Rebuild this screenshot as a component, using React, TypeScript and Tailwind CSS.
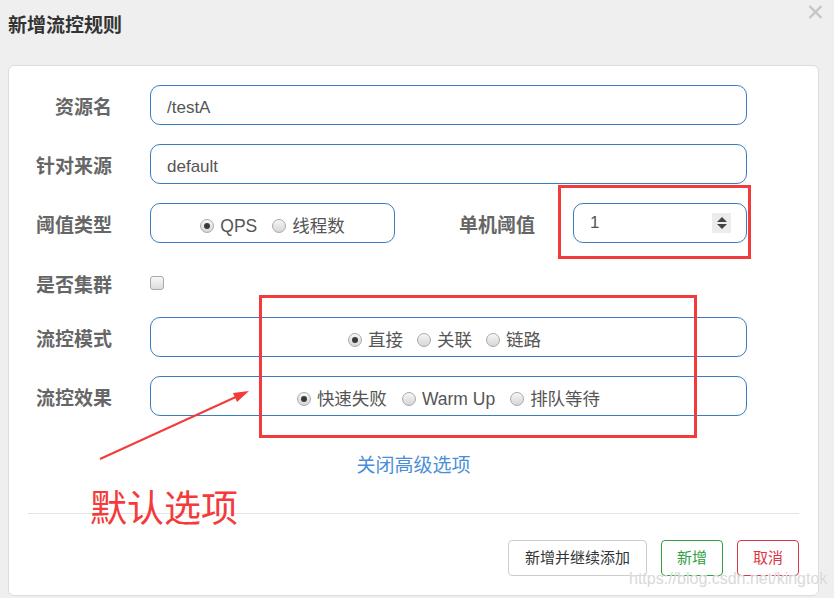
import type React from "react"

const font = "font-['Liberation_Sans','Noto_Sans_CJK_SC',sans-serif]"

const Radio: React.FC<{ checked?: boolean; label: string }> = ({ checked, label }) => (
    <label className="flex items-center gap-[6px]">
        <span className="w-[14px] h-[14px] rounded-full border border-[#a9a9a9] bg-gradient-to-b from-[#f6f6f6] to-[#d6d6d6] flex items-center justify-center">
            {checked && <span className="w-[6px] h-[6px] rounded-full bg-[#3a3a3a]"></span>}
        </span>
        <span className="text-[17.5px] text-[#555]">{label}</span>
    </label>
)

const Label: React.FC<{ text: string; className?: string }> = ({ text, className }) => (
    <div className={`h-[40px] pt-[6px] text-right text-[19px] font-bold text-[#666] leading-[34px] ${className ?? ""}`}>{text}</div>
)

const App: React.FC = () => {
    return (
        <div className={`relative w-[834px] h-[598px] overflow-hidden bg-[#efefef] ${font}`}>
            {/* header */}
            <div className="px-[8px] pt-[16px] text-[19px] leading-[20px] font-bold text-[#333]">新增流控规则</div>
            <svg className="absolute left-[808px] top-[5px]" width="15" height="14" viewBox="0 0 15 14">
                <path d="M1.5 1 L13.5 13 M13.5 1 L1.5 13" stroke="#c4c4c4" strokeWidth="2.4" />
            </svg>

            {/* card */}
            <div className="mt-[29px] ml-[8px] w-[811px] h-[531px] bg-white border border-[#dcdcdc] rounded-[6px] px-[19px] pt-[19px]">
                <div className="flex h-[40px]">
                    <Label text="资源名" className="w-[84px]" />
                    <div className="ml-[38px] w-[597px] h-[40px] border border-[#3b7cc0] rounded-[10px] pl-[16px] pt-[5px] flex items-center text-[17px] text-[#555]">/testA</div>
                </div>
                <div className="flex h-[40px] mt-[19px]">
                    <Label text="针对来源" className="w-[84px]" />
                    <div className="ml-[38px] w-[597px] h-[40px] border border-[#3b7cc0] rounded-[10px] pl-[16px] pt-[5px] flex items-center text-[17px] text-[#555]">default</div>
                </div>
                <div className="flex h-[40px] mt-[19px]">
                    <Label text="阈值类型" className="w-[84px]" />
                    <div className="ml-[38px] w-[245px] h-[40px] border border-[#3b7cc0] rounded-[10px] pt-[6px] flex items-center justify-center gap-[15px]">
                        <Radio checked label="QPS" />
                        <Radio label="线程数" />
                    </div>
                    <Label text="单机阈值" className="w-[140px]" />
                    <div className="ml-[38px] w-[174px] h-[40px] border border-[#3b7cc0] rounded-[10px] pl-[16px] pr-[15px] flex items-center justify-between text-[17px] text-[#555]">
                        <span>1</span>
                        <span className="w-[19px] h-[20px] bg-[#ececec] flex flex-col items-center justify-center gap-[2px]">
                            <span className="w-0 h-0 border-l-[5px] border-r-[5px] border-b-[5px] border-l-transparent border-r-transparent border-b-[#444]"></span>
                            <span className="w-0 h-0 border-l-[5px] border-r-[5px] border-t-[5px] border-l-transparent border-r-transparent border-t-[#444]"></span>
                        </span>
                    </div>
                </div>
                <div className="flex h-[40px] mt-[20px] items-center">
                    <Label text="是否集群" className="w-[84px]" />
                    <span className="ml-[38px] w-[14px] h-[14px] rounded-[3px] border border-[#a9a9a9] bg-gradient-to-b from-[#f8f8f8] to-[#dcdcdc]"></span>
                </div>
                <div className="flex h-[40px] mt-[14px]">
                    <Label text="流控模式" className="w-[84px]" />
                    <div className="ml-[38px] w-[597px] h-[40px] border border-[#3b7cc0] rounded-[10px] pt-[6px] pr-[8px] flex items-center justify-center gap-[14px]">
                        <Radio checked label="直接" />
                        <Radio label="关联" />
                        <Radio label="链路" />
                    </div>
                </div>
                <div className="flex h-[40px] mt-[19px]">
                    <Label text="流控效果" className="w-[84px]" />
                    <div className="ml-[38px] w-[597px] h-[40px] border border-[#3b7cc0] rounded-[10px] pt-[6px] flex items-center justify-center gap-[15px]">
                        <Radio checked label="快速失败" />
                        <Radio label="Warm Up" />
                        <Radio label="排队等待" />
                    </div>
                </div>
                <div className="mt-[40px] h-[20px] leading-[20px] text-center text-[19px] text-[#4a8fd6]">关闭高级选项</div>
                <div className="mt-[37px] border-t border-[#e3e3e3]"></div>
                <div className="mt-[26px] flex justify-end gap-[14px]">
                    <button className="h-[36px] px-[16px] rounded-[4px] border border-[#cccccc] text-[15px] text-[#333] bg-white">新增并继续添加</button>
                    <button className="h-[36px] px-[15px] rounded-[4px] border border-[#2ea043] text-[15px] text-[#2ea043] bg-white">新增</button>
                    <button className="h-[36px] px-[15px] rounded-[4px] border border-[#dc3545] text-[15px] text-[#dc3545] bg-white">取消</button>
                </div>
            </div>

            {/* annotations */}
            <div className="absolute left-[558px] top-[185px] w-[193px] h-[74px] border-[3px] border-[#f43b3b]"></div>
            <div className="absolute left-[259px] top-[295px] w-[438px] h-[143px] border-[3px] border-[#f43b3b]"></div>
            <svg className="absolute left-0 top-0" width="834" height="598" viewBox="0 0 834 598">
                <line x1="100" y1="459" x2="238" y2="396" stroke="#f43b3b" strokeWidth="2" />
                <polygon points="249,391 233,393 237,402" fill="#f43b3b" />
            </svg>
            <div className="absolute left-[90px] top-[491px] text-[37px] leading-[37px] text-[#f43b3b]">默认选项</div>
            <div className="absolute left-[629px] top-[570px] text-[16px] leading-[18px] text-[#d9d9d9] [text-shadow:0_0_1px_rgba(255,255,255,0.9)]">https://blog.csdn.net/kingtok</div>
        </div>
    )
}

export default App
